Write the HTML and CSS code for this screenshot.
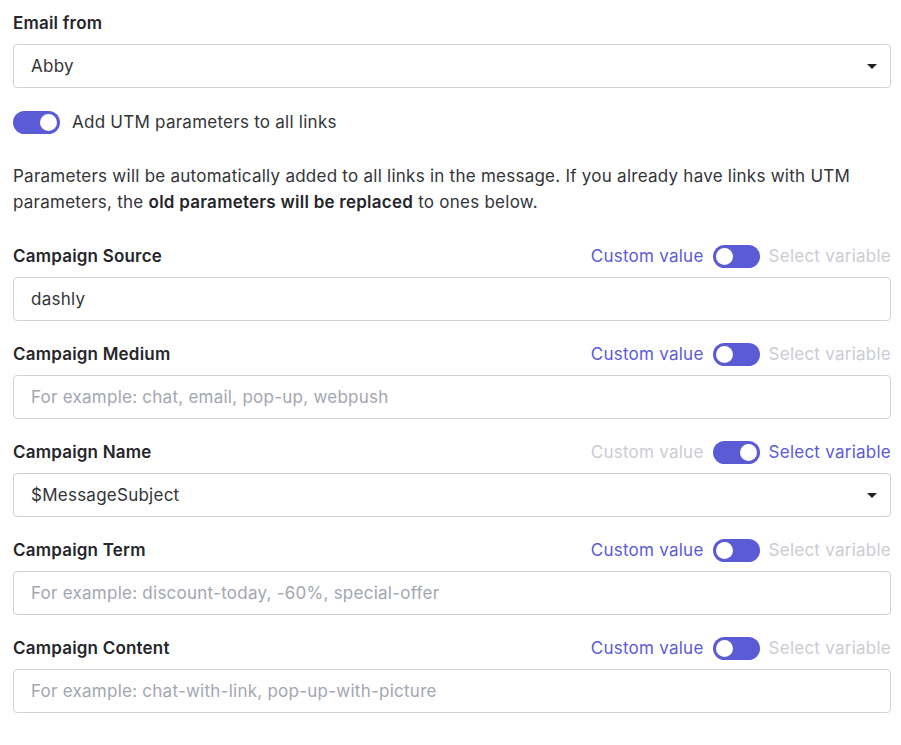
FILE: index.html
```html
<!DOCTYPE html>
<html lang="en">
<head>
<meta charset="utf-8">
<title>UTM settings</title>
<link rel="stylesheet" href="styles.css">
</head>
<body>
<div class="form">
  <div class="label">Email from</div>
  <div class="field select">
    <span class="value">Abby</span>
    <span class="caret"></span>
  </div>

  <div class="utm-row">
    <span class="switch on"><span class="knob"></span></span>
    <span class="utm-label">Add UTM parameters to all links</span>
  </div>

  <p class="note">Parameters will be automatically added to all links in the message. If you already have links with UTM parameters, the <b>old parameters will be replaced</b> to ones below.</p>

  <div class="group">
    <div class="head">
      <span class="label">Campaign Source</span>
      <span class="mode">
        <span class="opt active">Custom value</span>
        <span class="switch"><span class="knob"></span></span>
        <span class="opt">Select variable</span>
      </span>
    </div>
    <div class="field"><span class="value">dashly</span></div>
  </div>

  <div class="group">
    <div class="head">
      <span class="label">Campaign Medium</span>
      <span class="mode">
        <span class="opt active">Custom value</span>
        <span class="switch"><span class="knob"></span></span>
        <span class="opt">Select variable</span>
      </span>
    </div>
    <div class="field"><span class="placeholder">For example: chat, email, pop-up, webpush</span></div>
  </div>

  <div class="group">
    <div class="head">
      <span class="label">Campaign Name</span>
      <span class="mode">
        <span class="opt">Custom value</span>
        <span class="switch on"><span class="knob"></span></span>
        <span class="opt active">Select variable</span>
      </span>
    </div>
    <div class="field select"><span class="value">$MessageSubject</span><span class="caret"></span></div>
  </div>

  <div class="group">
    <div class="head">
      <span class="label">Campaign Term</span>
      <span class="mode">
        <span class="opt active">Custom value</span>
        <span class="switch"><span class="knob"></span></span>
        <span class="opt">Select variable</span>
      </span>
    </div>
    <div class="field"><span class="placeholder">For example: discount-today, -60%, special-offer</span></div>
  </div>

  <div class="group">
    <div class="head">
      <span class="label">Campaign Content</span>
      <span class="mode">
        <span class="opt active">Custom value</span>
        <span class="switch"><span class="knob"></span></span>
        <span class="opt">Select variable</span>
      </span>
    </div>
    <div class="field"><span class="placeholder">For example: chat-with-link, pop-up-with-picture</span></div>
  </div>
</div>
</body>
</html>
```

FILE: styles.css
```css
html, body {
  margin: 0;
  padding: 0;
  background: #ffffff;
}

body {
  font-family: Inter, "Noto Sans", "Liberation Sans", sans-serif;
  font-size: 17px;
  letter-spacing: 0.25px;
  color: #333438;
}

.form {
  width: 878px;
  padding: 12px 0 0 13px;
  display: flex;
  flex-direction: column;
}

.label {
  font-weight: 600;
  font-size: 17px;
  letter-spacing: 0.2px;
  line-height: 22px;
  color: #25262b;
}

.form > .label {
  margin-bottom: 10px;
}

.field {
  box-sizing: border-box;
  height: 44px;
  border: 1px solid #cfd0d8;
  border-radius: 4px;
  padding: 0 17px;
  display: flex;
  align-items: center;
  justify-content: space-between;
}

.value {
  color: #333438;
}

.placeholder {
  color: #a3a6b1;
}

.caret {
  width: 0;
  height: 0;
  border-left: 5px solid transparent;
  border-right: 5px solid transparent;
  border-top: 5px solid #222222;
  margin-right: -4px;
}

.utm-row {
  display: flex;
  align-items: center;
  gap: 12px;
  margin-top: 22px;
}

.utm-label {
  line-height: 24px;
}

.switch {
  box-sizing: border-box;
  position: relative;
  width: 47px;
  height: 23px;
  border-radius: 12px;
  background: #5b5bd6;
  display: inline-flex;
  align-items: center;
  padding: 0 3px;
  flex: none;
}

.knob {
  width: 17px;
  height: 17px;
  border-radius: 50%;
  background: #ffffff;
}

.switch.on {
  justify-content: flex-end;
}

.note {
  margin: 29px 0 0;
  line-height: 26px;
}

.note b {
  font-weight: 600;
  color: #25262b;
}

.group {
  display: flex;
  flex-direction: column;
  margin-top: 21px;
}

.note + .group {
  margin-top: 29px;
}

.head {
  height: 24px;
  display: flex;
  align-items: center;
  justify-content: space-between;
  margin-bottom: 9px;
}

.mode {
  display: flex;
  align-items: center;
  gap: 9px;
}

.opt {
  color: #cbccd3;
}

.opt.active {
  color: #5b5bd6;
}
```
